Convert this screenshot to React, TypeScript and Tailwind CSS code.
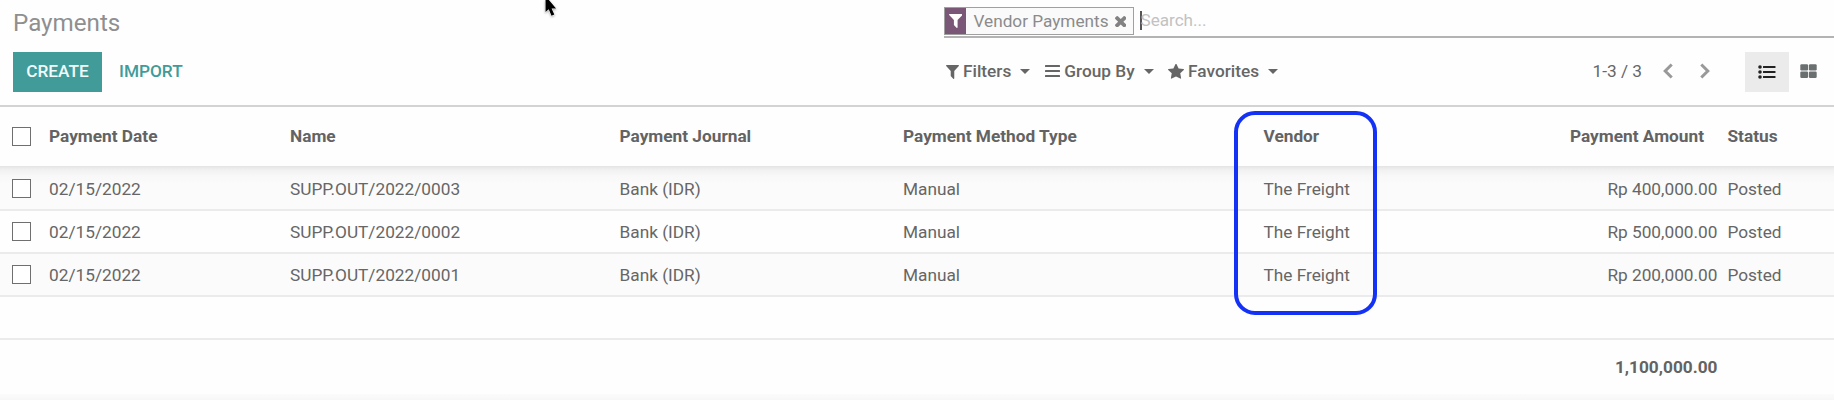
import React from "react";

const FILTER =
  "M1595 295q17 41-14 70l-493 493v742q0 42-39 59-13 5-25 5-27 0-45-19l-256-256q-19-19-19-45v-486l-493-493q-31-29-14-70 17-39 59-39h1280q42 0 59 39z";
const STAR =
  "M1728 647q0 22-26 48l-363 354 86 500q1 7 1 20 0 21-10.5 35.5t-30.5 14.5q-19 0-40-12l-449-236-449 236q-22 12-40 12-21 0-31.5-14.5t-10.5-35.5q0-6 2-20l86-500-364-354q-25-27-25-48 0-37 56-46l502-73 225-455q19-41 49-41t49 41l225 455 502 73q56 9 56 46z";
const TIMES =
  "M1490 1322q0 40-28 68l-136 136q-28 28-68 28t-68-28l-294-294-294 294q-28 28-68 28t-68-28l-136-136q-28-28-28-68t28-68l294-294-294-294q-28-28-28-68t28-68l136-136q28-28 68-28t68 28l294 294 294-294q28-28 68-28t68 28l136 136q28 28 28 68t-28 68l-294 294 294 294q28 28 28 68z";

function Glyph({ d, box, className }: { d: string; box: string; className: string }) {
  return (
    <svg viewBox={box} className={className} fill="currentColor" preserveAspectRatio="none">
      <path d={d} />
    </svg>
  );
}

function Caret() {
  return (
    <svg viewBox="0 0 10 5" className="ml-[9px] h-[5px] w-[10px] shrink-0 -translate-y-px" fill="currentColor">
      <path d="M0 0h10L5 5z" />
    </svg>
  );
}

function Checkbox() {
  return <span className="ml-[12px] block h-[19px] w-[19px] border-[1.5px] border-[#6f6f6f] bg-white" />;
}

const COLS =
  "grid grid-cols-[49px_241px_329.5px_283.5px_360.5px_200px_254px_116.5px] items-center whitespace-nowrap";

const rows = [
  { name: "SUPP.OUT/2022/0003", amount: "Rp 400,000.00" },
  { name: "SUPP.OUT/2022/0002", amount: "Rp 500,000.00" },
  { name: "SUPP.OUT/2022/0001", amount: "Rp 200,000.00" },
];

export default function App() {
  return (
    <div className="relative flex h-[400px] w-[1834px] flex-col overflow-hidden bg-[#fefefe] font-['Roboto',sans-serif] text-[17.25px] leading-[20px] text-[#666666]">
      <header className="flex h-[107px] shrink-0 whitespace-nowrap border-b-2 border-[#d3d3d3]">
        <div className="w-[944px] pl-[13px]">
          <h1 className="pt-[9px] text-[24.2px] leading-[28px] text-[#8f8f8f]">Payments</h1>
          <div className="mt-[15px] flex h-[40px]">
            <button className="w-[89px] bg-[#419b99] pb-[2px] font-medium text-[#f2fbfb]">CREATE</button>
            <button className="ml-[17px] pb-[2px] font-medium text-[#3f9c99]">IMPORT</button>
          </div>
        </div>

        <div className="flex w-[890px] flex-col">
          <div className="flex h-[38px] border-b-2 border-[#b3b3b3] pt-[7px]">
            <div className="flex h-[28px] w-[190px] shrink-0 items-center border border-[#a0a0a0] bg-[#fafafa]">
              <span className="flex h-full w-[21px] shrink-0 items-center justify-center bg-[#7a5677] text-white">
                <Glyph d={FILTER} box="192 256 1408 1408" className="h-[14px] w-[13.5px]" />
              </span>
              <span className="ml-[7.5px] w-[135px] shrink-0 text-[17.2px] text-[#8b8b8b]">Vendor Payments</span>
              <Glyph
                d={TIMES}
                box="302 366 1188 1188"
                className="ml-[6px] mt-px h-[11.5px] w-[11.5px] shrink-0 text-[#828282]"
              />
            </div>
            <div className="ml-[6px] mt-[4px] h-[19px] w-[2px] bg-[#555555]" />
            <span className="-ml-[1.5px] mt-[3px] text-[17.1px] text-[#c2c2c2]">Search...</span>
          </div>

          <div className="mt-[14px] flex h-[40px] items-center pl-[1.5px]">
            <Glyph d={FILTER} box="192 256 1408 1408" className="h-[14px] w-[13px]" />
            <span className="ml-[4.5px] pb-[2px] font-medium">Filters</span>
            <Caret />
            <svg viewBox="0 0 15 14" className="ml-[15px] h-[14px] w-[15px] -translate-y-px" fill="currentColor">
              <rect y="1" width="15" height="2.1" rx="0.5" />
              <rect y="6" width="15" height="2.1" rx="0.5" />
              <rect y="11" width="15" height="2.1" rx="0.5" />
            </svg>
            <span className="ml-[4px] pb-[2px] font-medium">Group By</span>
            <Caret />
            <Glyph d={STAR} box="64 60 1664 1587" className="ml-[14.5px] h-[15px] w-[16px] -translate-y-px" />
            <span className="ml-[4px] pb-[2px] font-medium">Favorites</span>
            <Caret />
            <span className="ml-auto pb-[2px]">1-3 / 3</span>
            <svg viewBox="0 0 10 16" className="ml-[21px] h-[16px] w-[10px] -translate-y-px" fill="none" stroke="#999" strokeWidth="3">
              <path d="M8.7 1.5 2.2 8l6.5 6.5" />
            </svg>
            <svg viewBox="0 0 10 16" className="ml-[26.5px] h-[16px] w-[10px] -translate-y-px" fill="none" stroke="#999" strokeWidth="3">
              <path d="M1.3 1.5 7.8 8l-6.5 6.5" />
            </svg>
            <button className="ml-[35.5px] flex h-[40px] w-[43.5px] items-center justify-center bg-[#ebebeb] text-[#222222]">
              <svg viewBox="0 0 18 14" className="h-[14px] w-[18px]" fill="currentColor">
                <circle cx="2" cy="2" r="1.8" />
                <circle cx="2" cy="7" r="1.8" />
                <circle cx="2" cy="12" r="1.8" />
                <rect x="5" y="0.9" width="12.5" height="2.2" rx="0.4" />
                <rect x="5" y="5.9" width="12.5" height="2.2" rx="0.4" />
                <rect x="5" y="10.9" width="12.5" height="2.2" rx="0.4" />
              </svg>
            </button>
            <svg viewBox="0 0 17 14" className="ml-[11.5px] mr-[17px] h-[14px] w-[17px] -translate-y-px" fill="#6a6f70">
              <rect x="0.3" y="0.2" width="7.8" height="6.3" rx="1.2" />
              <rect x="8.9" y="0.2" width="7.8" height="6.3" rx="1.2" />
              <rect x="0.3" y="7.6" width="7.8" height="6.3" rx="1.2" />
              <rect x="8.9" y="7.6" width="7.8" height="6.3" rx="1.2" />
            </svg>
          </div>
        </div>
      </header>

      <div className={`${COLS} h-[59px] shrink-0 font-bold text-[#636363]`}>
        <Checkbox />
        <span className="pb-[2px]">Payment Date</span>
        <span className="pb-[2px]">Name</span>
        <span className="pb-[2px]">Payment Journal</span>
        <span className="pb-[2px]">Payment Method Type</span>
        <span className="pb-[2px]">Vendor</span>
        <span className="pb-[2px] pr-[13.5px] text-right">Payment Amount</span>
        <span className="pb-[2px] pl-[10px]">Status</span>
      </div>

      {rows.map((r, i) => (
        <div
          key={r.name}
          className={`${COLS} shrink-0 border-b-2 border-[#ebebeb] ${
            i === 0
              ? "h-[45px] bg-[linear-gradient(#e4e4e4,#f1f1f1_4px,#f8f8f8_10px,#fbfbfb_18px)] pt-[2px]"
              : i === 1
                ? "h-[43px]"
                : "h-[43px] bg-[#fbfbfb]"
          }`}
        >
          <Checkbox />
          <span>02/15/2022</span>
          <span>{r.name}</span>
          <span>Bank (IDR)</span>
          <span>Manual</span>
          <span>The Freight</span>
          <span className="text-right">{r.amount}</span>
          <span className="pl-[10px]">Posted</span>
        </div>
      ))}

      <div className="h-[43px] shrink-0 border-b-2 border-[#ebebeb]" />
      <div className={`${COLS} h-[54px] shrink-0 font-bold text-[#636363]`}>
        <span className="col-start-7 text-right">1,100,000.00</span>
      </div>
      <div className="grow bg-[linear-gradient(#fbfbfb,#f7f7f7)]" />

      <div className="pointer-events-none absolute left-[1234px] top-[111px] h-[204px] w-[143px] rounded-[21px] border-4 border-[#1432f5]" />
      <svg
        className="pointer-events-none absolute left-[540px] top-0 h-[22px] w-[22px] drop-shadow-[0_1px_1px_rgba(0,0,0,0.3)]"
        viewBox="0 0 22 22"
      >
        <path
          d="M5.5-4v16l3.2-2.8 2.8 6.6 2.8-1.2-2.7-6.2h4.5z"
          fill="#000"
          stroke="#fff"
          strokeWidth="1"
          paintOrder="stroke"
        />
      </svg>
    </div>
  );
}
